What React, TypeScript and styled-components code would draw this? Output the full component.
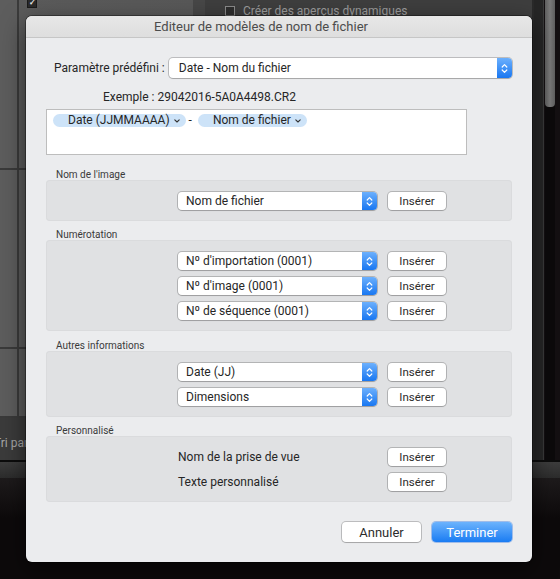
import styled, { createGlobalStyle } from "styled-components"

const GlobalStyle = createGlobalStyle`
  html, body {
    margin: 0;
    padding: 0;
    background: #0b0809;
  }
  body {
    font-family: Roboto, "Liberation Sans", sans-serif;
    -webkit-font-smoothing: antialiased;
  }
`

/* ---------- backdrop: the library window behind the sheet ---------- */

const Screen = styled.div`
  position: relative;
  width: 560px;
  height: 579px;
  overflow: hidden;
  display: flex;
  flex-direction: column;
  background: #0b0809;
`

const Workspace = styled.div`
  display: flex;
  height: 460px;
`

const LeftPanel = styled.div`
  width: 193px;
  display: flex;
  flex-direction: column;
  background: #5a5a5a;
`

const PanelCell = styled.div<{ $height: number }>`
  display: flex;
  height: ${p => p.$height}px;
  border-bottom: 2px solid #3a3a3a;
`

const GutterCell = styled.div`
  width: 17px;
  background: #5d5d5d;
  border-right: 2px solid #3b3b3b;
`

const MainCell = styled.div`
  flex: 1;
  padding-left: 8px;
  background: linear-gradient(90deg, #5b5b5b, #585858);
`

const TinyCheck = styled.div<{ $checked?: boolean }>`
  width: 8px;
  height: 8px;
  margin-top: ${p => (p.$checked ? "-2px" : "0")};
  border: 1px solid ${p => (p.$checked ? "#1a1a1a" : "#8a8a8a")};
  background: ${p => (p.$checked ? "#2a2a2a" : "#2e2e2e")};
  color: #e8e8e8;
  font-size: 8px;
  line-height: 8px;
  text-align: center;
  font-weight: bold;
`

const SortBar = styled.div`
  height: 42px;
  box-sizing: border-box;
  padding-top: 8px;
  background: #3b3b3b;
  display: flex;
  align-items: center;
  color: #a8a8a8;
  font-size: 12px;
`

const SortText = styled.span`
  margin-left: -6px;
`

const CenterPanel = styled.div`
  flex: 1;
  display: flex;
  flex-direction: column;
  background: #3e3e3e;
  border-left: 12px solid #474747;
  border-right: 2px solid #2a2a2a;
`

const PreviewOption = styled.div`
  display: flex;
  align-items: center;
  gap: 8px;
  padding: 4px 0 0 20px;
  color: #9c9c9c;
  font-size: 12px;
`

const RightRail = styled.div`
  width: 26px;
  display: flex;
  background: #141012;
`

const RailGutter = styled.div`
  width: 9px;
  background: #262626;
  border-right: 1px solid #3a3a3a;
`

const ScrollTrack = styled.div`
  width: 10px;
  margin-left: 1px;
  background: #0c0a0b;
`

const ScrollThumb = styled.div`
  height: 107px;
  border-radius: 0 0 4px 4px;
  background: linear-gradient(90deg, #5f5f5f, #7a7a7a, #5f5f5f);
`

const BottomStrip = styled.div`
  flex: 1;
  display: flex;
  flex-direction: column;
  border-top: 2px solid #0c0c0c;
`

const FilmBar = styled.div`
  height: 16px;
  background: linear-gradient(#3d3d3d, #2c2c2c);
`

const FilmFloor = styled.div`
  flex: 1;
  background: linear-gradient(#1e1b1c, #0d0a0b 40%);
`

/* ---------- the sheet ---------- */

const Dialog = styled.div`
  position: absolute;
  left: 26px;
  top: 16px;
  width: 506px;
  display: flex;
  flex-direction: column;
  background: #ebecee;
  border-radius: 6px;
  overflow: hidden;
  box-shadow: 0 0 0 1px rgba(0, 0, 0, 0.35), 0 8px 24px rgba(0, 0, 0, 0.55);
`

const TitleBar = styled.div`
  height: 21px;
  line-height: 21px;
  padding-right: 36px;
  text-align: center;
  font-size: 13px;
  color: #4c4c4c;
  background: linear-gradient(#e7e7e7, #dedede);
  border-bottom: 1px solid #c6c6c6;
`

const Body = styled.div`
  display: flex;
  flex-direction: column;
  padding: 20px;
`

const PresetRow = styled.div`
  display: flex;
  align-items: center;
  gap: 4px;
  padding-left: 8px;
`

const FieldLabel = styled.span`
  font-size: 12px;
  color: #262626;
  white-space: nowrap;
`

const ExampleRow = styled.div`
  margin-top: 12px;
  padding-left: 57px;
  font-size: 12px;
  line-height: 14px;
  color: #262626;
`

const TokenBox = styled.div`
  margin-top: 5px;
  width: 421px;
  height: 46px;
  box-sizing: border-box;
  padding: 4px 6px;
  background: #fff;
  border: 1px solid #bdbdbd;
  display: flex;
  align-items: flex-start;
`

const Token = styled.span`
  display: inline-flex;
  align-items: center;
  gap: 4px;
  height: 13px;
  padding: 0 6px 0 15px;
  border-radius: 7px;
  background: #cde3f8;
  font-size: 12px;
  line-height: 13px;
  color: #262626;
`

const Dash = styled.span`
  font-size: 12px;
  line-height: 13px;
  color: #262626;
  margin: 0 6px 0 3px;
`

const Section = styled.div<{ $gap: number }>`
  margin-top: ${p => p.$gap}px;
  display: flex;
  flex-direction: column;
`

const SectionLabel = styled.div`
  padding-left: 10px;
  font-size: 10px;
  line-height: 10px;
  color: #3a3a3a;
`

const SectionBox = styled.div`
  display: flex;
  flex-direction: column;
  gap: 7px;
  padding: 12px 0 11px 132px;
  border-radius: 4px;
  background: #e0e1e3;
  box-shadow: inset 0 0 0 1px #dadbdd;
`

const FieldRow = styled.div`
  display: flex;
  align-items: center;
  gap: 11px;
`

const Select = styled.div<{ $width: number; $height?: number }>`
  display: flex;
  width: ${p => p.$width}px;
  height: ${p => p.$height ?? 18}px;
  box-sizing: border-box;
  background: #fff;
  border-radius: 4px;
  overflow: hidden;
  box-shadow: 0 0 0 1px rgba(0, 0, 0, 0.2), 0 1px 1px rgba(0, 0, 0, 0.12);
`

const SelectText = styled.span<{ $pad?: number }>`
  flex: 1;
  align-self: center;
  padding-left: ${p => p.$pad ?? 8}px;
  font-size: 12px;
  color: #262626;
  white-space: nowrap;
`

const Stepper = styled.span`
  width: 15px;
  display: flex;
  align-items: center;
  justify-content: center;
  background: linear-gradient(#6cb0fd, #1977f1);
`

const RowText = styled.span`
  width: 199px;
  font-size: 12px;
  line-height: 18px;
  color: #262626;
`

const Button = styled.button<{ $primary?: boolean; $width: number; $height?: number; $size?: number }>`
  width: ${p => p.$width}px;
  height: ${p => p.$height ?? 18}px;
  padding: 0;
  border: none;
  border-radius: 4px;
  font-family: inherit;
  font-size: ${p => p.$size ?? 11.5}px;
  color: ${p => (p.$primary ? "#fff" : "#2c2c2c")};
  background: ${p => (p.$primary ? "linear-gradient(#6cb3fd, #1a7cf3)" : "#fff")};
  box-shadow: ${p =>
    p.$primary
      ? "0 0 0 1px rgba(20, 100, 220, 0.35)"
      : "0 0 0 1px rgba(0, 0, 0, 0.2), 0 1px 1px rgba(0, 0, 0, 0.12)"};
`

const Footer = styled.div`
  margin-top: 20px;
  display: flex;
  justify-content: flex-end;
  gap: 11px;
`

function StepperIcon() {
  return (
    <Stepper>
      <svg width="7" height="11" viewBox="0 0 7 11" fill="none" stroke="#fff" strokeWidth="1.2" strokeLinecap="round" strokeLinejoin="round">
        <path d="M1.2 4 L3.5 1.7 L5.8 4" />
        <path d="M1.2 7 L3.5 9.3 L5.8 7" />
      </svg>
    </Stepper>
  )
}

function Chevron() {
  return (
    <svg width="6" height="4" viewBox="0 0 6 4" fill="none" stroke="#333" strokeWidth="1.1" strokeLinecap="round" strokeLinejoin="round">
      <path d="M0.8 0.8 L3 3 L5.2 0.8" />
    </svg>
  )
}

function PopupField({ value }: { value: string }) {
  return (
    <FieldRow>
      <Select $width={199}>
        <SelectText>{value}</SelectText>
        <StepperIcon />
      </Select>
      <Button $width={58}>Insérer</Button>
    </FieldRow>
  )
}

const sections: { title: string; gap: number; fields: string[] }[] = [
  { title: "Nom de l'image", gap: 15, fields: ["Nom de fichier"] },
  { title: "Numérotation", gap: 9, fields: ["Nº d'importation (0001)", "Nº d'image (0001)", "Nº de séquence (0001)"] },
  { title: "Autres informations", gap: 10, fields: ["Date (JJ)", "Dimensions"] },
]

export default function App() {
  return (
    <>
      <GlobalStyle />
      <Screen>
        <Workspace>
          <LeftPanel>
            <PanelCell $height={170}>
              <GutterCell />
              <MainCell>
                <TinyCheck $checked>✓</TinyCheck>
              </MainCell>
            </PanelCell>
            <PanelCell $height={180}>
              <GutterCell />
              <MainCell />
            </PanelCell>
            <PanelCell $height={68}>
              <GutterCell />
              <MainCell />
            </PanelCell>
            <SortBar>
              <SortText>Tri par :</SortText>
            </SortBar>
          </LeftPanel>
          <CenterPanel>
            <PreviewOption>
              <TinyCheck />
              Créer des aperçus dynamiques
            </PreviewOption>
          </CenterPanel>
          <RightRail>
            <RailGutter />
            <ScrollTrack>
              <ScrollThumb />
            </ScrollTrack>
          </RightRail>
        </Workspace>
        <BottomStrip>
          <FilmBar />
          <FilmFloor />
        </BottomStrip>

        <Dialog>
          <TitleBar>Editeur de modèles de nom de fichier</TitleBar>
          <Body>
            <PresetRow>
              <FieldLabel>Paramètre prédéfini :</FieldLabel>
              <Select $width={345} $height={20}>
                <SelectText $pad={10}>Date - Nom du fichier</SelectText>
                <StepperIcon />
              </Select>
            </PresetRow>
            <ExampleRow>Exemple : 29042016-5A0A4498.CR2</ExampleRow>
            <TokenBox>
              <Token>
                Date (JJMMAAAA) <Chevron />
              </Token>
              <Dash>-</Dash>
              <Token>
                Nom de fichier <Chevron />
              </Token>
            </TokenBox>

            {sections.map(s => (
              <Section key={s.title} $gap={s.gap}>
                <SectionLabel>{s.title}</SectionLabel>
                <SectionBox>
                  {s.fields.map(f => (
                    <PopupField key={f} value={f} />
                  ))}
                </SectionBox>
              </Section>
            ))}

            <Section $gap={9}>
              <SectionLabel>Personnalisé</SectionLabel>
              <SectionBox>
                <FieldRow>
                  <RowText>Nom de la prise de vue</RowText>
                  <Button $width={58}>Insérer</Button>
                </FieldRow>
                <FieldRow>
                  <RowText>Texte personnalisé</RowText>
                  <Button $width={58}>Insérer</Button>
                </FieldRow>
              </SectionBox>
            </Section>

            <Footer>
              <Button $width={79} $height={20} $size={13}>Annuler</Button>
              <Button $width={80} $height={20} $size={13} $primary>Terminer</Button>
            </Footer>
          </Body>
        </Dialog>
      </Screen>
    </>
  )
}
